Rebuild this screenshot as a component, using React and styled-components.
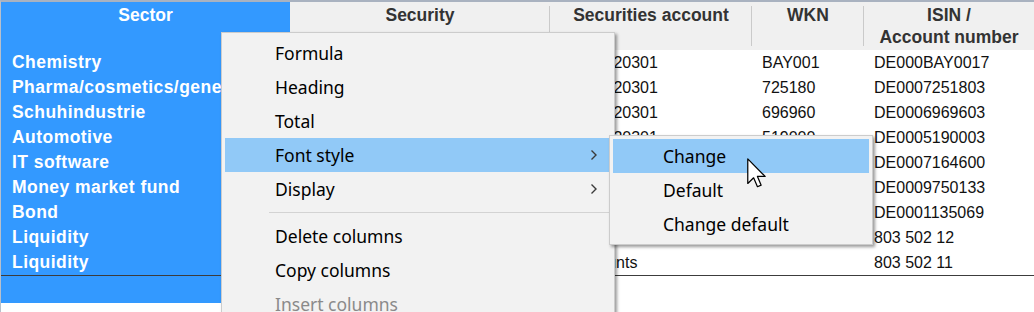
import React from 'react';
import styled, { createGlobalStyle } from 'styled-components';

const GlobalStyle = createGlobalStyle`
  html, body {
    margin: 0;
    padding: 0;
    background: #fff;
    overflow: hidden;
  }
`;

const Screen = styled.div`
  position: relative;
  width: 1034px;
  height: 312px;
  overflow: hidden;
  box-sizing: border-box;
  background: #fff;
  border-top: 2px solid #a9b2c0;
  border-left: 1px solid #b8c0cc;
  font-family: "Liberation Sans", Arial, sans-serif;
`;

const Table = styled.div`
  display: grid;
  grid-template-columns: 289px 260px 202px 112px 1fr;
  grid-template-rows: 48px repeat(9, 25px) 28px;
`;

const HeadCell = styled.div`
  position: relative;
  padding-top: 2px;
  background: ${p => (p.$selected ? '#3399ff' : '#f0f0f0')};
  color: ${p => (p.$selected ? '#fff' : '#333')};
  font-weight: bold;
  font-size: 17.5px;
  line-height: 22px;
  text-align: center;

  &::after {
    content: '';
    position: absolute;
    right: 0;
    top: 4px;
    bottom: 4px;
    width: 1px;
    background: ${p => (p.$divider ? '#cacaca' : 'transparent')};
  }
`;

const Cell = styled.div`
  padding-left: ${p => (p.$selected ? '11px' : '10px')};
  background: ${p => (p.$selected ? '#3399ff' : '#fff')};
  color: ${p => (p.$selected ? '#fff' : '#111')};
  font-weight: ${p => (p.$selected ? 'bold' : 'normal')};
  font-size: ${p => (p.$selected ? '17.5px' : '16px')};
  letter-spacing: ${p => (p.$selected ? '0.45px' : '0')};
  line-height: 25px;
  white-space: nowrap;
  border-top: ${p => (p.$footer ? '1px solid #3c3c3c' : 'none')};
`;

const Menu = styled.div`
  position: absolute;
  left: ${p => p.$left}px;
  top: ${p => p.$top}px;
  width: ${p => p.$width}px;
  box-sizing: border-box;
  padding: 3px;
  background: #f2f2f2;
  border: 1px solid #cccccc;
  box-shadow: 2px 2px 3px rgba(0, 0, 0, 0.4);
  font-family: "Noto Sans", "Open Sans", sans-serif;
  font-size: 17.5px;
`;

const MenuItem = styled.div`
  display: flex;
  align-items: center;
  justify-content: space-between;
  height: 34px;
  padding-left: 50px;
  padding-right: 13px;
  background: ${p => (p.$active ? '#91c9f7' : 'transparent')};
  color: ${p => (p.$disabled ? '#8a8a8a' : '#000')};
`;

const Separator = styled.div`
  height: 13px;
  display: flex;
  align-items: center;
  padding-left: 44px;

  &::before {
    content: '';
    flex: 1;
    height: 1px;
    background: #d3d3d3;
  }
`;

const Pointer = styled.svg`
  position: absolute;
  left: 746px;
  top: 156px;
`;

const Chevron = () => (
  <svg width="8" height="12" viewBox="0 0 8 12">
    <polyline points="1.5,1.5 6,6 1.5,10.5" fill="none" stroke="#3a3a3a" strokeWidth="1.4" />
  </svg>
);

const columns = [
  { label: 'Sector', selected: true },
  { label: 'Security', divider: true },
  { label: 'Securities account', divider: true },
  { label: 'WKN', divider: true },
  { label: <>ISIN /<br />Account number</> },
];

const rows = [
  ['Chemistry', 'Bayer', '12345620301', 'BAY001', 'DE000BAY0017'],
  ['Pharma/cosmetics/general', 'Beiersdorf', '12345620301', '725180', 'DE0007251803'],
  ['Schuhindustrie', 'Puma', '12345620301', '696960', 'DE0006969603'],
  ['Automotive', 'BMW', '12345620301', '519000', 'DE0005190003'],
  ['IT software', 'SAP', '12345620301', '716460', 'DE0007164600'],
  ['Money market fund', 'Money market', '12345620301', '975013', 'DE0009750133'],
  ['Bond', 'Federal bond', '12345620301', '113506', 'DE0001135069'],
  ['Liquidity', 'Call money', '12345620301', '', '803 502 12'],
  ['Liquidity', 'Current account', '3 accounts', '', '803 502 11'],
];

const mainItems = [
  { label: 'Formula' },
  { label: 'Heading' },
  { label: 'Total' },
  { label: 'Font style', sub: true, active: true },
  { label: 'Display', sub: true },
  { sep: true },
  { label: 'Delete columns' },
  { label: 'Copy columns' },
  { label: 'Insert columns', disabled: true },
];

const subItems = [
  { label: 'Change', active: true },
  { label: 'Default' },
  { label: 'Change default' },
];

export default function App() {
  return (
    <Screen>
      <GlobalStyle />
      <Table>
        {columns.map((c, i) => (
          <HeadCell key={i} $selected={c.selected} $divider={c.divider}>
            {c.label}
          </HeadCell>
        ))}
        {rows.map((r, ri) =>
          r.map((v, ci) => (
            <Cell key={`${ri}-${ci}`} $selected={ci === 0}>
              {v}
            </Cell>
          ))
        )}
        {columns.map((c, i) => (
          <Cell key={`f${i}`} $selected={i === 0} $footer />
        ))}
      </Table>

      <Menu $left={220} $top={30} $width={394}>
        {mainItems.map((m, i) =>
          m.sep ? (
            <Separator key={i} />
          ) : (
            <MenuItem key={i} $active={m.active} $disabled={m.disabled}>
              <span>{m.label}</span>
              {m.sub && <Chevron />}
            </MenuItem>
          )
        )}
      </Menu>

      <Menu $left={608} $top={133} $width={264}>
        {subItems.map((m, i) => (
          <MenuItem key={i} $active={m.active}>
            <span>{m.label}</span>
          </MenuItem>
        ))}
      </Menu>

      <Pointer width="20" height="31" viewBox="0 0 13 20">
        <path
          d="M0.5 0.5 L0.5 16.5 L4.3 12.8 L6.8 18.6 L9.2 17.6 L6.8 11.9 L11.8 11.9 Z"
          fill="#fff"
          stroke="#000"
          strokeWidth="0.8"
          strokeLinejoin="round"
        />
      </Pointer>
    </Screen>
  );
}
